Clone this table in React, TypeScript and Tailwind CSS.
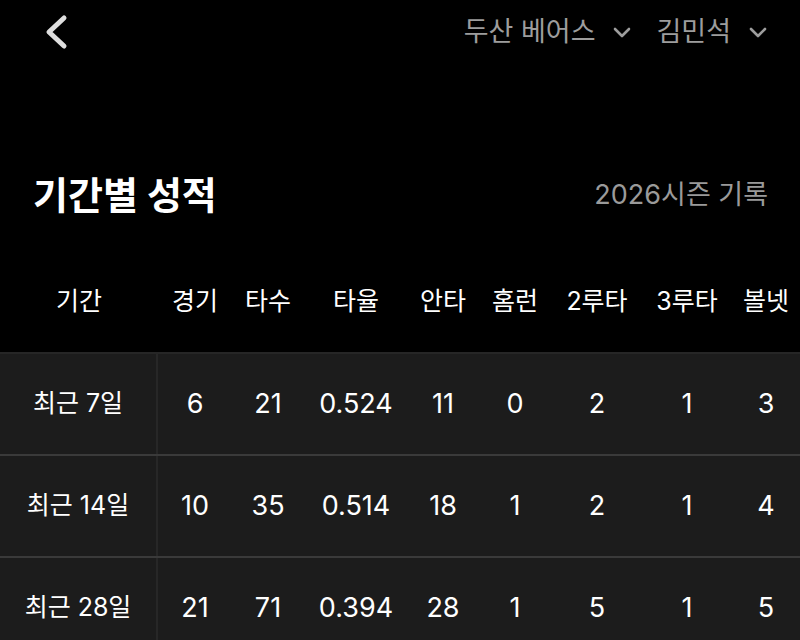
const rows = [
  { period: "최근 7일", g: 6, ab: 21, avg: "0.524", h: 11, hr: 0, d: 2, t: 1, bb: 3 },
  { period: "최근 14일", g: 10, ab: 35, avg: "0.514", h: 18, hr: 1, d: 2, t: 1, bb: 4 },
  { period: "최근 28일", g: 21, ab: 71, avg: "0.394", h: 28, hr: 1, d: 5, t: 1, bb: 5 },
];

const headers = ["기간", "경기", "타수", "타율", "안타", "홈런", "2루타", "3루타", "볼넷"];

const cols = "grid grid-cols-[158px_74px_72px_104px_70px_74px_90px_90px_68px]";

function Chevron() {
  return (
    <svg width="18" height="11" viewBox="0 0 18 11" fill="none">
      <polyline points="2,2 9,9 16,2" stroke="#9d9d9d" strokeWidth="2.6" strokeLinecap="round" strokeLinejoin="round" />
    </svg>
  );
}

export default function App() {
  return (
    <div
      className="w-[800px] h-[640px] overflow-hidden bg-black text-white"
      style={{ fontFamily: 'Inter, "Noto Sans CJK KR", sans-serif' }}
    >
      <div className="h-16 flex items-center justify-between pl-[42px] pr-[33px]">
        <svg width="28" height="36" viewBox="0 0 28 36" fill="none">
          <polyline points="22,4 7,18 22,32" stroke="#dedede" strokeWidth="5" strokeLinecap="round" strokeLinejoin="round" />
        </svg>
        <div className="flex items-center text-[27px] text-[#9d9d9d]">
          <span>두산 베어스</span>
          <span className="ml-[18px]"><Chevron /></span>
          <span className="ml-[25px]">김민석</span>
          <span className="ml-[18px]"><Chevron /></span>
        </div>
      </div>

      <div className="mt-[111px] h-10 flex items-center justify-between pl-[33px] pr-[32px]">
        <h1 className="text-[38px] font-bold">기간별 성적</h1>
        <span className="text-[27px] text-[#9a9a9a]">2026시즌 기록</span>
      </div>

      <div className={`${cols} mt-[37px] h-[100px] items-center text-center text-[25px]`}>
        {headers.map((h) => (
          <div key={h} className="whitespace-nowrap">{h}</div>
        ))}
      </div>

      {rows.map((r, i) => (
        <div
          key={r.period}
          className={`${cols} h-[102px] items-stretch text-center text-[27px] bg-[#1c1c1c] border-t-2 ${i === 0 ? "border-[#262626]" : "border-[#3a3a3a]"}`}
        >
          <div className="flex items-center justify-center border-r-2 border-[#272727] text-[25px] whitespace-nowrap">{r.period}</div>
          <div className="flex items-center justify-center">{r.g}</div>
          <div className="flex items-center justify-center">{r.ab}</div>
          <div className="flex items-center justify-center">{r.avg}</div>
          <div className="flex items-center justify-center">{r.h}</div>
          <div className="flex items-center justify-center">{r.hr}</div>
          <div className="flex items-center justify-center">{r.d}</div>
          <div className="flex items-center justify-center">{r.t}</div>
          <div className="flex items-center justify-center">{r.bb}</div>
        </div>
      ))}
    </div>
  );
}
